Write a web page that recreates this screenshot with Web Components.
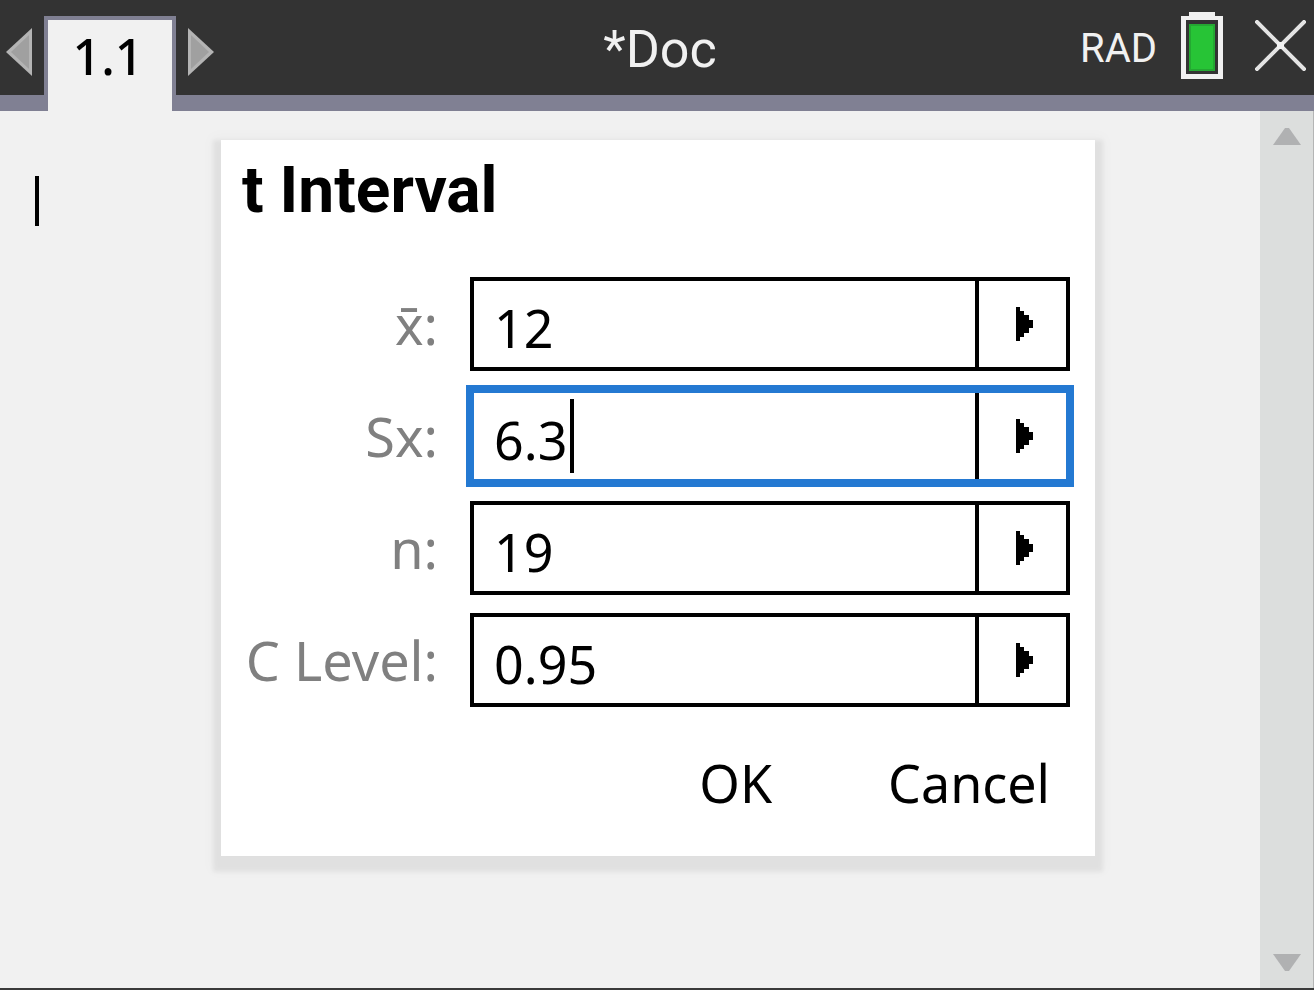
<!DOCTYPE html>
<html lang="en">
<head>
<meta charset="utf-8">
<title>t Interval</title>
<style>
  body { margin: 0; background: #f1f1f1; color: #000; font-family: "Noto Sans", sans-serif; }
</style>
</head>
<body>
<calc-app></calc-app>
<script>
const reset = `
  *, *::before, *::after { box-sizing: border-box; }
  button, input { margin: 0; padding: 0; border: 0; background: none; color: inherit; font: inherit; outline: none; border-radius: 0; }
  button { display: block; cursor: pointer; }
  svg { display: block; }
`;

function define(name, html, setup) {
  const template = document.createElement('template');
  template.innerHTML = html;
  customElements.define(name, class extends HTMLElement {
    constructor() {
      super();
      this.attachShadow({ mode: 'open' }).append(template.content.cloneNode(true));
    }
    connectedCallback() { if (setup) setup(this, this.shadowRoot); }
  });
}

define('calc-header', `
<style>${reset}
  :host {
    display: grid; grid-template-columns: 1fr auto 1fr; align-items: start;
    height: 111px; padding: 0 8px 0 6px; font-family: Roboto, sans-serif; color: #f1f1f1;
    background: linear-gradient(#808093, #808093) bottom / 100% 16px no-repeat #333;
    box-sizing: border-box;
  }
  nav { display: flex; align-items: flex-start; gap: 12px; padding-top: 16px; }
  nav svg { margin-top: 12px; }
  .tab {
    width: 132px; height: 95px; padding: 0 4px 20px 0; border: 4px solid #808093; border-bottom: 0;
    background: #f1f1f1; color: #000; font: 500 50px/70px "Noto Sans", sans-serif;
  }
  .title { padding: 20px 0 0 8px; font-size: 52px; line-height: 60px; }
  .status { display: flex; justify-content: flex-end; align-items: flex-start; }
  .mode { padding-top: 25px; margin-right: 24px; font-size: 40px; line-height: 48px; }
  .battery { margin: 12px 32px 0 0; }
  .close { margin-top: 20px; }
</style>
<nav aria-label="Pages">
  <button aria-label="Previous page"><svg width="26" height="48" viewBox="0 0 26 48"><path d="M26 0v48L0 24z" fill="#b4b4b4"/><path d="M23 7v34L5 24z" fill="#a0a0a0"/></svg></button>
  <button class="tab">1.1</button>
  <button aria-label="Next page"><svg width="26" height="48" viewBox="0 0 26 48"><path d="M0 0v48L26 24z" fill="#b4b4b4"/><path d="M3 7v34L21 24z" fill="#a0a0a0"/></svg></button>
</nav>
<div class="title"><slot></slot></div>
<div class="status">
  <span class="mode">RAD</span>
  <svg class="battery" width="42" height="67" viewBox="0 0 42 67" role="img" aria-label="Battery full">
    <path d="M8 0h26v4h8v63H0V4h8zM5 8v54h32V8z" fill="#f1f1f1" fill-rule="evenodd"/>
    <path d="M8 12h26v47H8z" fill="#24a832"/><path d="M10 14h22v43H10z" fill="#27c436"/>
  </svg>
  <button class="close" aria-label="Close"><svg width="51" height="51" viewBox="0 0 51 51"><path d="M2 2l47 47M49 2L2 49" stroke="#e4e4e4" stroke-width="4" stroke-linecap="square"/><path d="M22 22h7v7h-7z" fill="#f1f1f1"/></svg></button>
</div>`);

define('scroll-strip', `
<style>${reset}
  :host {
    display: flex; flex-direction: column; justify-content: space-between; align-items: center;
    width: 54px; padding: 17px 0; background: #dcdedd; border-right: 1px solid #b4b5b5; box-sizing: border-box;
  }
</style>
<button aria-label="Scroll up"><svg width="28" height="17" viewBox="0 0 28 17"><path d="M12 0h4l12 17H0z" fill="#b0b1b2"/></svg></button>
<button aria-label="Scroll down"><svg width="28" height="17" viewBox="0 0 28 17"><path d="M0 0h28L16 17h-4z" fill="#b0b1b2"/></svg></button>`);

define('stat-field', `
<style>${reset}
  :host { display: grid; grid-template-columns: 196px minmax(0, 1fr); column-gap: 32px; font-size: 52px; line-height: 72px; }
  label { align-self: center; text-align: right; color: #808080; font-size: 54px; white-space: nowrap; }
  .box { display: flex; height: 94px; border: 4px solid #000; background: #fff; }
  .entry { flex: 1; display: flex; align-items: center; min-width: 0; padding-left: 20px; cursor: text; }
  input { flex: 1; min-width: 0; height: 80px; padding-top: 6px; }
  .caret { display: none; width: 4px; height: 74px; margin-left: 3px; background: #000; }
  .more { display: grid; flex: none; place-items: center; width: 91px; border-left: 4px solid #000; padding-left: 4px; }
  :host([active]) .box { border-color: #2479d2; outline: 4px solid #2479d2; }
  :host([active]) input { flex: none; field-sizing: content; caret-color: transparent; }
  :host([active]) .caret { display: block; }
</style>
<label for="value"><slot></slot></label>
<div class="box">
  <div class="entry"><input id="value" type="text" autocomplete="off"><span class="caret"></span></div>
  <button class="more" aria-label="Choose a variable"><svg width="17" height="34" viewBox="0 0 17 34"><path d="M0 0h4v4h4v4h5v5h4v8h-4v5H8v4H4v4H0z"/></svg></button>
</div>`, (host, root) => {
  root.querySelector('input').value = host.getAttribute('value');
});

define('stat-dialog', `
<style>${reset}
  :host {
    display: block; padding: 13px 25px 37px 21px; background: #fff;
    box-shadow: 0 8px 4px 8px rgba(0,0,0,.05), 0 6px 12px 10px rgba(0,0,0,.025);
  }
  h1 { margin: 0; font: bold 64px/76px Roboto, sans-serif; }
  .fields { display: grid; grid-template-columns: minmax(0, 1fr); row-gap: 18px; padding-top: 48px; }
  .actions { display: flex; justify-content: flex-end; gap: 116px; padding: 40px 20px 0 0; font-size: 52px; line-height: 72px; }
</style>
<h1><slot name="title"></slot></h1>
<div class="fields"><slot></slot></div>
<div class="actions"><button>OK</button><button>Cancel</button></div>`);

define('calc-app', `
<style>${reset}
  :host { display: flex; flex-direction: column; position: relative; min-height: 100vh; border-bottom: 2px solid #3a3a3a; box-sizing: border-box; }
  main { flex: 1; display: flex; justify-content: space-between; }
  .cursor { width: 4px; height: 50px; margin: 65px 0 0 35px; background: #000; }
  .overlay { position: absolute; inset: 0; display: grid; grid-template-columns: minmax(0, 1fr); align-items: center; padding: 8px 219px 0 221px; pointer-events: none; }
  stat-dialog { pointer-events: auto; }
</style>
<calc-header>*Doc</calc-header>
<main><div class="cursor"></div><scroll-strip></scroll-strip></main>
<div class="overlay">
  <stat-dialog role="dialog">
    <span slot="title">t Interval</span>
    <stat-field value="12">x&#772;:</stat-field>
    <stat-field value="6.3" active>Sx:</stat-field>
    <stat-field value="19">n:</stat-field>
    <stat-field value="0.95">C Level:</stat-field>
  </stat-dialog>
</div>`);
</script>
</body>
</html>
